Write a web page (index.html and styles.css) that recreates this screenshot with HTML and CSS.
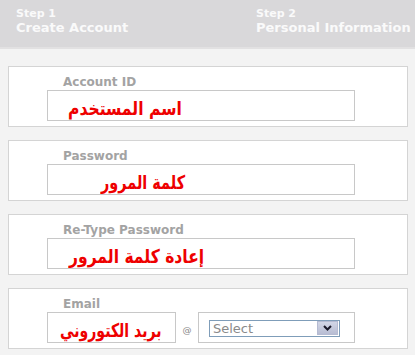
FILE: index.html
```html
<!DOCTYPE html>
<html>
<head>
<meta charset="utf-8">
<link rel="stylesheet" href="styles.css">
</head>
<body>
<div class="header">
  <div class="step step-one">
    <div class="step-num">Step 1</div>
    <div class="step-title">Create Account</div>
  </div>
  <div class="step">
    <div class="step-num">Step 2</div>
    <div class="step-title">Personal Information</div>
  </div>
</div>
<div class="form">
  <div class="box">
    <div class="label">Account ID</div>
    <div class="field field-full"><span class="ar ar-1" dir="rtl">اسم المستخدم</span></div>
  </div>
  <div class="box">
    <div class="label">Password</div>
    <div class="field field-full"><span class="ar ar-2" dir="rtl">كلمة المرور</span></div>
  </div>
  <div class="box">
    <div class="label">Re-Type Password</div>
    <div class="field field-full"><span class="ar ar-3" dir="rtl">إعادة كلمة المرور</span></div>
  </div>
  <div class="box">
    <div class="label">Email</div>
    <div class="email-row">
      <div class="field field-email"><span class="ar ar-4" dir="rtl">بريد الكتوروني</span></div>
      <span class="at">@</span>
      <div class="field field-domain">
        <div class="select">
          <span class="select-text">Select</span>
          <span class="select-btn">
            <svg width="9" height="6" viewBox="0 0 9 6"><path d="M1 1 L4.5 4.5 L8 1" fill="none" stroke="#1a1a2a" stroke-width="2"/></svg>
          </span>
        </div>
      </div>
    </div>
  </div>
</div>
</body>
</html>
```
FILE: styles.css
```css
html, body {
  margin: 0;
  padding: 0;
}
body {
  background: #f3f3f3;
  font-family: "DejaVu Sans", Verdana, sans-serif;
}
.header {
  height: 49px;
  background: #d9d8da;
  border-bottom: 2px solid #e2e1e2;
  display: flex;
  box-sizing: border-box;
  padding-top: 7px;
}
.step {
  color: #fafafa;
  font-weight: bold;
}
.step-one {
  padding-left: 16px;
  width: 240px;
}
.step-num {
  font-size: 11px;
  line-height: 13px;
}
.step-title {
  font-size: 13px;
  line-height: 16px;
}
.form {
  padding: 17px 8px 0 8px;
  display: flex;
  flex-direction: column;
  gap: 13px;
}
.box {
  width: 400px;
  box-sizing: border-box;
  background: #fff;
  border: 1px solid #d4d4d4;
  padding: 7px 0 5px 0;
}
.label {
  margin-left: 54px;
  font-size: 12px;
  line-height: 16px;
  font-weight: bold;
  color: #a3a3a3;
}
.field {
  box-sizing: border-box;
  height: 31px;
  border: 1px solid #c8c8c8;
  background: #fff;
  position: relative;
}
.field-full {
  margin-left: 38px;
  width: 308px;
}
.ar {
  position: absolute;
  top: 4px;
  font-family: "DejaVu Sans", sans-serif;
  font-weight: bold;
  font-size: 19px;
  line-height: 26px;
  color: #ee0000;
  white-space: nowrap;
  transform: scaleX(0.82);
  transform-origin: left center;
}
.ar-1 { left: 20px; }
.ar-2 { left: 53px; transform: scaleX(0.76); }
.ar-3 { left: 21px; }
.ar-4 { left: 12px; transform: scaleX(0.74); }
.email-row {
  margin-left: 38px;
  display: flex;
  align-items: center;
}
.field-email {
  width: 129px;
  overflow: hidden;
}
.at {
  font-size: 9px;
  color: #888;
  width: 22px;
  text-align: center;
  padding-top: 4px;
}
.field-domain {
  width: 157px;
  display: flex;
  align-items: center;
  padding-left: 10px;
  padding-top: 1px;
}
.select {
  box-sizing: border-box;
  width: 131px;
  height: 17px;
  border: 1px solid #7f9db9;
  display: flex;
  align-items: center;
  justify-content: space-between;
  padding: 0 1px 0 3px;
}
.select-text {
  font-family: "DejaVu Sans", sans-serif;
  font-size: 13px;
  line-height: 15px;
  color: #8a8a8a;
}
.select-btn {
  width: 21px;
  height: 14px;
  background: linear-gradient(#d2d6e6, #b8bdd3);
  border: 1px solid #b5bbd2;
  box-sizing: border-box;
  display: flex;
  align-items: center;
  justify-content: center;
}
```
